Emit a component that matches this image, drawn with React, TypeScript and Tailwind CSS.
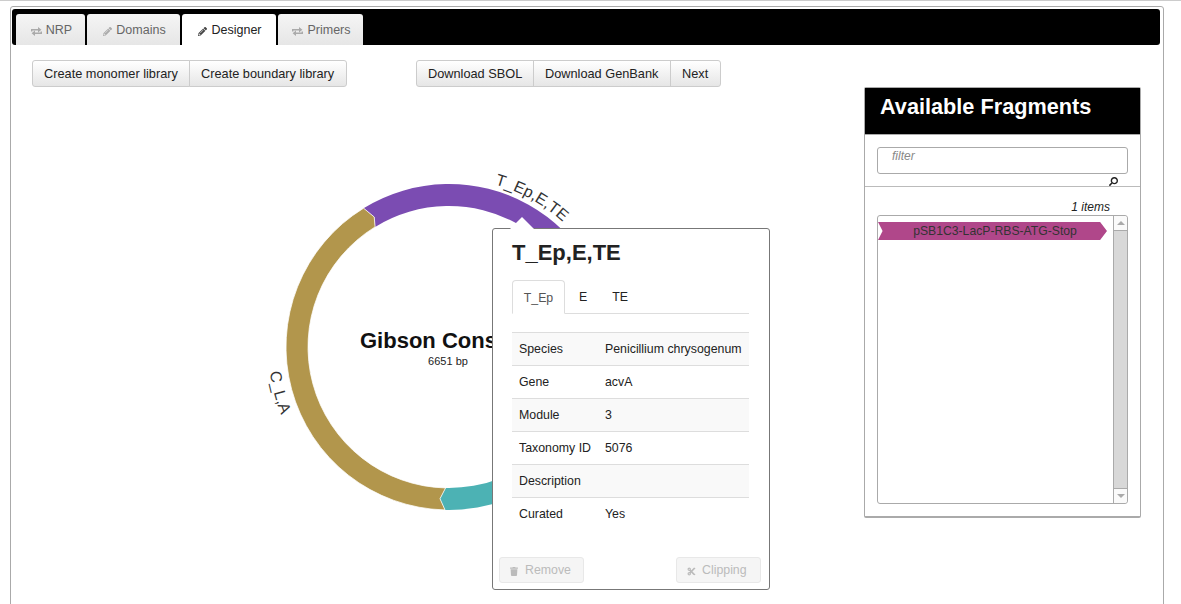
import { FaCut, FaPencilAlt, FaSearch, FaTrash } from 'react-icons/fa';

const CENTER = { x: 449, y: 347 };
const OUTER = 163;
const INNER = 141;

const TABS = [
  { label: 'NRP', icon: 'swap', width: 'w-[69px]' },
  { label: 'Domains', icon: 'pencil', width: 'w-[93px]' },
  { label: 'Designer', icon: 'pencil', width: 'w-[94px]', active: true },
  { label: 'Primers', icon: 'swap', width: 'w-[85px]' },
];

const ROWS = [
  ['Species', 'Penicillium chrysogenum'],
  ['Gene', 'acvA'],
  ['Module', '3'],
  ['Taxonomy ID', '5076'],
  ['Description', ''],
  ['Curated', 'Yes'],
];

function SwapIcon() {
  return (
    <svg width="11" height="9" viewBox="0 0 11 9" className="fill-current mt-[3px]">
      <path d="M0 3.4V2h7V0l3.4 2.7L7 5.4V3.4H1.4V4.6H0zM11 5.4V7H4v2L.6 6.2 4 3.6V5.6h5.6V4.4H11z" />
    </svg>
  );
}

// angles in degrees clockwise from 12 o'clock
function pt(r: number, deg: number) {
  const a = (deg * Math.PI) / 180;
  return `${(CENTER.x + r * Math.sin(a)).toFixed(2)} ${(CENTER.y - r * Math.cos(a)).toFixed(2)}`;
}

function arcPath(r: number, from: number, to: number, sweep: 0 | 1) {
  return `M${pt(r, from)} A${r} ${r} 0 0 ${sweep} ${pt(r, to)}`;
}

const GOLD_START = -31.6;
const TEAL_END = 181.4;
const GOLD_TIP = pt(150, -29.9);
const TEAL_TIP = pt(152, 183.4);

function Plasmid() {
  return (
    <svg viewBox="11 87 853 517" className="w-[853px] h-[517px] shrink-0">
      {/* purple, notched at the gold tip */}
      <path
        d={`M${pt(OUTER, GOLD_START)} L${GOLD_TIP} L${pt(INNER, GOLD_START)} A${INNER} ${INNER} 0 0 1 ${pt(INNER, 90)} L${pt(OUTER, 90)} A${OUTER} ${OUTER} 0 0 0 ${pt(OUTER, GOLD_START)} Z`}
        fill="#7b4cb2"
      />
      {/* teal, the hidden part runs under the popover */}
      <path
        d={`M${pt(INNER, TEAL_END)} L${TEAL_TIP} L${pt(OUTER, TEAL_END)} A${OUTER} ${OUTER} 0 0 0 ${pt(OUTER, 90)} L${pt(INNER, 90)} A${INNER} ${INNER} 0 0 1 ${pt(INNER, TEAL_END)} Z`}
        fill="#4cb2b4"
      />
      {/* gold */}
      <path
        d={`M${pt(OUTER, GOLD_START)} L${GOLD_TIP} L${pt(INNER, GOLD_START)} A${INNER} ${INNER} 0 0 0 ${pt(INNER, TEAL_END)} L${TEAL_TIP} L${pt(OUTER, TEAL_END)} A${OUTER} ${OUTER} 0 0 1 ${pt(OUTER, GOLD_START)} Z`}
        fill="#b2964c"
        stroke="#fff"
        strokeWidth="0.75"
      />
      <path id="labelTop" d={arcPath(169, 0, 58, 1)} fill="none" />
      <path id="labelLeft" d={arcPath(181, 285, 225, 0)} fill="none" />
      <text fontSize="16" fill="#333">
        <textPath href="#labelTop" startOffset="50%" textAnchor="middle">
          T_Ep,E,TE
        </textPath>
      </text>
      <text fontSize="16" fill="#333">
        <textPath href="#labelLeft" startOffset="50%" textAnchor="middle">
          C_L,A
        </textPath>
      </text>
      <text x="360" y="348" fontSize="22" fontWeight="700" fill="#111">
        Gibson Construct
      </text>
      <text x="448" y="365" textAnchor="middle" fontSize="11" fill="#222">
        6651 bp
      </text>
    </svg>
  );
}

function Popover() {
  return (
    <div className="absolute left-[481px] top-[141px] w-[278px] h-[362px] bg-white border border-[#777] rounded-[3px] flex flex-col pl-[19px] pt-[11px]">
      <div className="absolute left-[17px] -top-[12px] w-[24px] h-[12px] overflow-hidden">
        <svg width="24" height="12" viewBox="0 0 24 12">
          <path d="M0 12 12 0 24 12Z" fill="#fff" />
        </svg>
      </div>
      <h3 className="text-[22px] leading-[26px] font-bold text-[#222] mb-[14px]">T_Ep,E,TE</h3>
      <div className="flex h-[34px] border-b border-[#ddd] text-[12.35px] w-[237px]">
        <div className="h-[34px] w-[53px] text-center pt-[8px] border border-[#ddd] border-b-white rounded-t-[4px] text-[#555] bg-white">T_Ep</div>
        <div className="h-[33px] px-[14px] pt-[8px] text-[#222]">E</div>
        <div className="h-[33px] pl-[11px] pt-[8px] text-[#222]">TE</div>
      </div>
      <div className="mt-[18px] w-[237px] border-t border-[#ddd] text-[12.35px] text-[#222]">
        {ROWS.map(([k, v], i) => (
          <div
            key={k}
            className={`flex h-[33px] items-center ${i < ROWS.length - 1 ? 'border-b border-[#ddd]' : ''} ${i % 2 === 0 ? 'bg-[#f9f9f9]' : 'bg-white'}`}
          >
            <span className="w-[93px] pl-[7px] shrink-0">{k}</span>
            <span className="whitespace-nowrap">{v}</span>
          </div>
        ))}
      </div>
      <div className="absolute left-[6px] right-[8px] bottom-[6px] flex justify-between text-[12.35px] text-[#bbb]">
        <div className="h-[26px] w-[85px] pl-[10px] flex items-center gap-[7px] bg-[#f5f5f5] border border-[#e8e8e8] rounded-[3px]">
          <FaTrash className="w-[8px] h-[9px] mt-[2px]" />
          Remove
        </div>
        <div className="h-[26px] w-[85px] pl-[10px] flex items-center gap-[6px] bg-[#f5f5f5] border border-[#e8e8e8] rounded-[3px]">
          <FaCut className="w-[9px] h-[9px] mt-[2px]" />
          Clipping
        </div>
      </div>
    </div>
  );
}

function FragmentsPanel() {
  return (
    <div className="w-[277px] h-[431px] shrink-0 border border-[#aaa] border-b-[2px] rounded-[2px] bg-white">
      <div className="h-[46px] bg-black text-white text-[21.7px] font-bold pl-[15px] pt-[5px] leading-[28px]">Available Fragments</div>
      <div className="h-[53px] border-b border-[#bbb] px-[12px] pt-[12px] relative border-t border-t-[#aaa]">
        <div className="h-[27px] w-[251px] border border-[#aaa] rounded-[3px] pl-[14px] text-[12px] italic text-[#888] leading-[15px] pt-[1px]">filter</div>
        <FaSearch className="absolute right-[22px] bottom-[0px] w-[9px] h-[9px] text-[#222] -scale-x-100" />
      </div>
      <div className="h-[28px] text-right pr-[30px] text-[12px] italic text-[#222] pt-[12px] leading-[16px]">1 items</div>
      <div className="ml-[12px] w-[251px] h-[289px] border border-[#aaa] rounded-[3px] flex">
        <div className="flex-1 pt-[6px]">
          <div className="h-[18px] w-[229px] pl-[5px] bg-[#b0478a] text-[12.2px] leading-[18px] text-center text-[#333] [clip-path:polygon(0_0,97%_0,100%_50%,97%_100%,0_100%,2%_50%)]">
            pSB1C3-LacP-RBS-ATG-Stop
          </div>
        </div>
        <div className="w-[14px] flex flex-col border-l border-[#aaa]">
          <div className="h-[15px] flex items-center justify-center border-b border-[#aaa] bg-[#fafafa] rounded-tr-[3px]">
            <div className="w-0 h-0 border-x-[4px] border-x-transparent border-b-[4px] border-b-[#aaa]" />
          </div>
          <div className="flex-1 bg-[#d8d8d8]" />
          <div className="h-[15px] flex items-center justify-center border-t border-[#aaa] bg-[#fafafa] rounded-br-[3px]">
            <div className="w-0 h-0 border-x-[4px] border-x-transparent border-t-[4px] border-t-[#aaa]" />
          </div>
        </div>
      </div>
    </div>
  );
}

const BTN = 'h-[27px] px-[11px] flex items-center text-[12.75px] text-[#222] bg-linear-to-b from-white to-[#e6e6e6] border border-[#ccc] whitespace-nowrap';

export default function App() {
  return (
    <div className="h-[604px] overflow-hidden bg-white font-['Liberation_Sans',Arial,sans-serif]">
      <div className="h-[1px] bg-[#ccc]" />
      <div className="ml-[10px] w-[1154px] h-[620px] mt-[5px] border border-[#aaa] rounded-t-[3px] pt-[2px]">
        <div className="mx-[1px] h-[36px] w-[1148px] bg-black rounded-[3px] flex items-end gap-[2px] pl-[4px]">
          {TABS.map((t) => (
            <div
              key={t.label}
              className={`${t.width} h-[31px] pt-[1px] pl-[2px] rounded-t-[3px] flex items-center justify-center gap-[4px] text-[12.5px] ${t.active ? 'bg-white text-[#222]' : 'bg-linear-to-b from-[#f5f5f5] to-[#e6e6e6] text-[#666]'}`}
            >
              <span className={t.active ? 'text-[#444]' : 'text-[#aaa]'}>
                {t.icon === 'swap' ? <SwapIcon /> : <FaPencilAlt className="w-[9px] h-[9px] mt-[3px]" />}
              </span>
              {t.label}
            </div>
          ))}
        </div>
        <div className="ml-[21px] mt-[15px] flex">
          <div className={`${BTN} w-[158px] rounded-l-[3px]`}>Create monomer library</div>
          <div className={`${BTN} w-[158px] -ml-[1px] rounded-r-[3px]`}>Create boundary library</div>
          <div className={`${BTN} w-[118px] ml-[69px] rounded-l-[3px]`}>Download SBOL</div>
          <div className={`${BTN} w-[138px] -ml-[1px]`}>Download GenBank</div>
          <div className={`${BTN} w-[51px] -ml-[1px] rounded-r-[3px]`}>Next</div>
        </div>
        <div className="relative flex">
          <Plasmid />
          <FragmentsPanel />
          <Popover />
        </div>
      </div>
    </div>
  );
}
